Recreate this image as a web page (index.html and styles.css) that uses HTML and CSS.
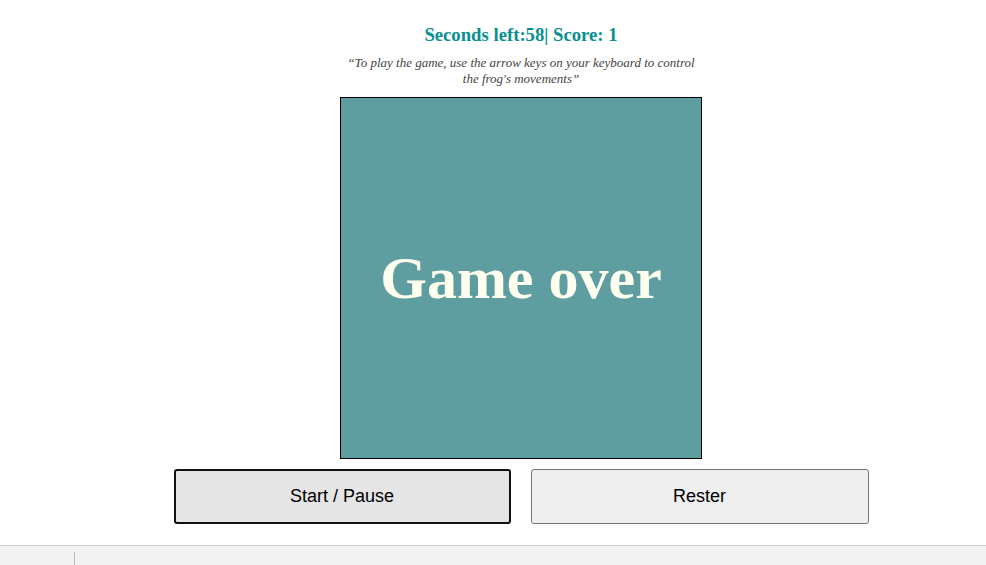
FILE: index.html
```html
<!DOCTYPE html>
<html>
<head>
<meta charset="utf-8">
<link rel="stylesheet" href="styles.css">
</head>
<body>
<div class="page">
  <h2 class="status">Seconds left:58| Score: 1</h2>
  <p class="hint">“To play the game, use the arrow keys on your keyboard to control the frog's movements”</p>
  <div class="board">
    <div class="over">Game over</div>
  </div>
  <div class="controls">
    <button class="btn btn-focus">Start / Pause</button>
    <button class="btn">Rester</button>
  </div>
</div>
<div class="statusbar"><span class="sep"></span></div>
</body>
</html>
```
FILE: styles.css
```css
html, body {
  margin: 0;
  padding: 0;
  background: #fff;
  font-family: "Liberation Serif", serif;
}
.page {
  display: flex;
  flex-direction: column;
  align-items: center;
  padding-left: 56px;
  padding-top: 24px;
}
.status {
  margin: 0;
  font-size: 18.7px;
  line-height: 22px;
  font-weight: bold;
  color: #0a8f91;
}
.hint {
  margin: 9px 0 0;
  width: 360px;
  text-align: center;
  font-style: italic;
  font-size: 13px;
  line-height: 16px;
  color: #444;
}
.board {
  margin-top: 10px;
  width: 360px;
  height: 360px;
  border: 1px solid #000;
  background: #5f9ea0;
  display: flex;
  align-items: center;
  justify-content: center;
}
.over {
  font-size: 60px;
  font-weight: bold;
  color: #fffff0;
  line-height: 1;
}
.controls {
  margin-top: 10px;
  display: flex;
  gap: 20px;
}
.btn {
  width: 338px;
  height: 55px;
  font-family: "Liberation Sans", sans-serif;
  font-size: 18px;
  color: #000;
  background: #efefef;
  border: 1px solid #767676;
  border-radius: 3px;
  padding: 0;
}
.btn-focus {
  width: 337px;
  background: #e5e5e5;
  border: 2px solid #111;
  border-radius: 3px;
}
.statusbar {
  position: fixed;
  left: 0;
  right: 0;
  bottom: 0;
  height: 19px;
  background: #f2f2f2;
  border-top: 1px solid #ccc;
}
.sep {
  position: absolute;
  left: 74px;
  top: 6px;
  bottom: 0;
  width: 1px;
  background: #bbb;
}
```
